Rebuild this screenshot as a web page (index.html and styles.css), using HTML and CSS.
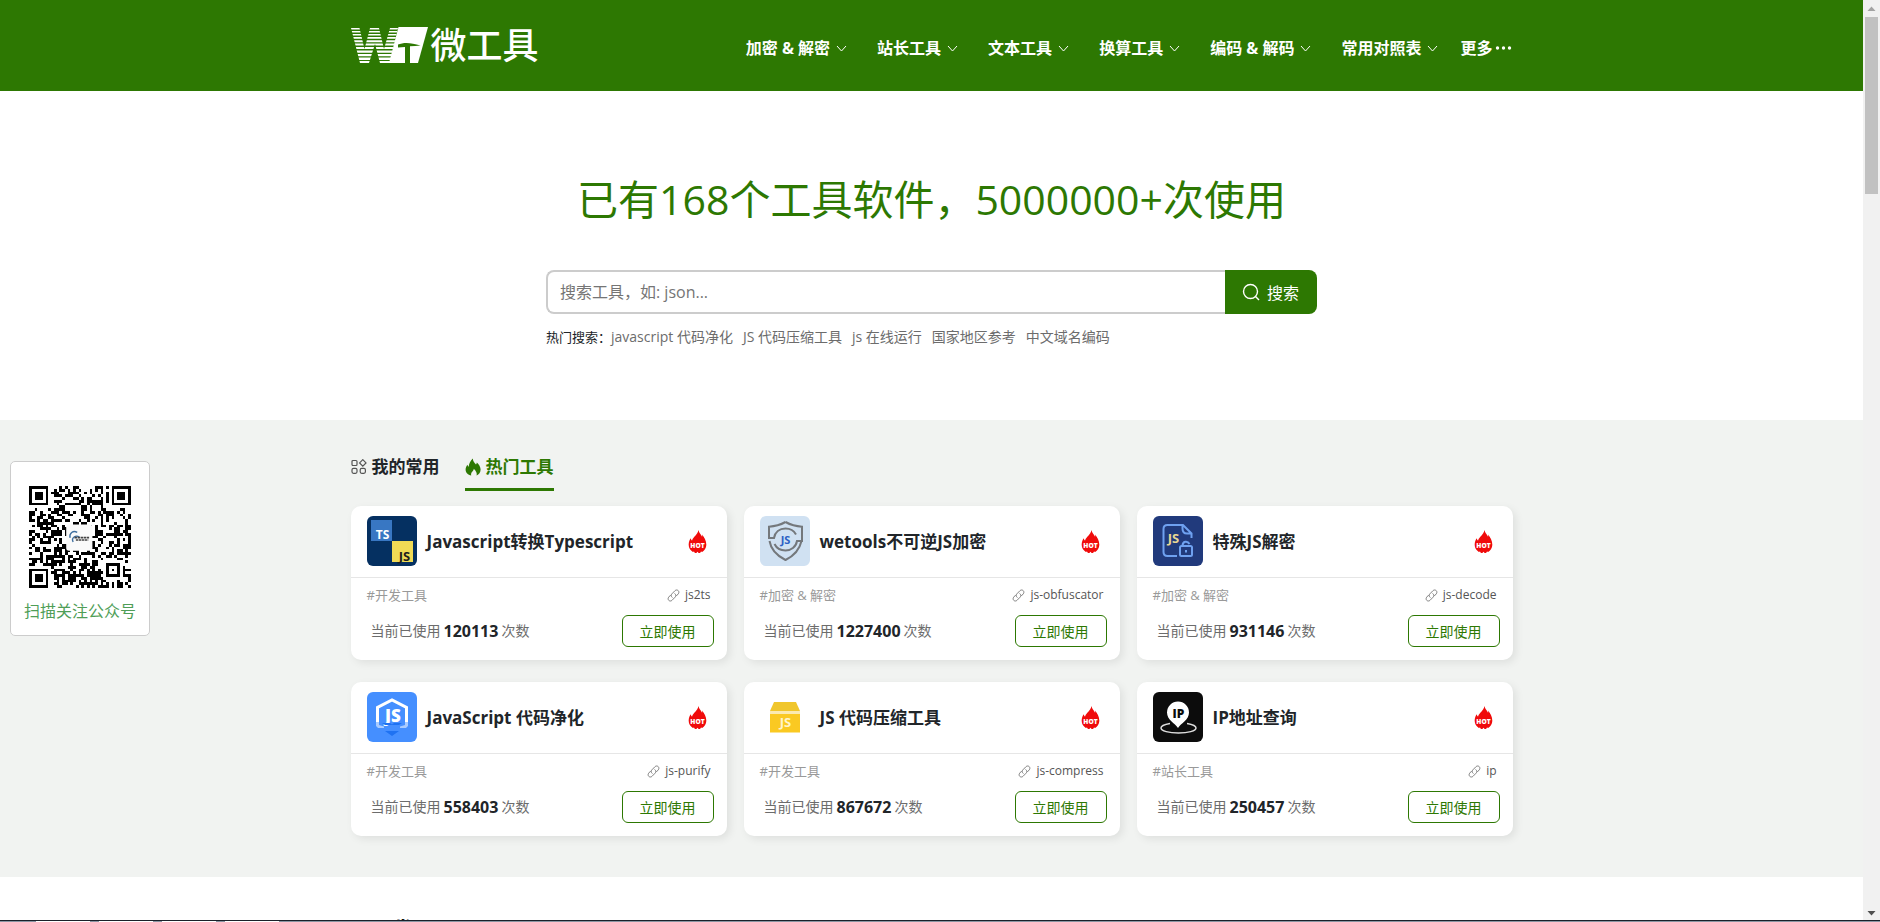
FILE: index.html
```html
<!DOCTYPE html>
<html lang="zh-CN">
<head>
<meta charset="utf-8">
<title>微工具</title>
<link rel="stylesheet" href="styles.css">
</head>
<body>
<svg class="sprite" aria-hidden="true">
  <symbol id="chev" viewBox="0 0 11 11"><path d="M1 3l4.500 5L10 3" fill="none" stroke="currentColor"/></symbol>
  <symbol id="flame" viewBox="0 0 20 25">
    <path fill="#f00b0b" d="M11 .5c.6 3 2.500 4.500 3.800 7 .3-.9.300-1.600.1-2.400C17 8 19.300 11.500 19.300 16c0 3.500-2 6-4.400 7.500l-1.200-.5-1 1.500h-1.500L10 23.200l-1.200 1.300H7.300l-1-1.500-1.200.5C2.500 22 .7 19.300.7 16c0-3.200 1-5.500 2.200-7 .3 1.300.6 2 1.400 2.500C5.500 7.500 10 6 11 .5z"/>
  </symbol>
  <symbol id="link" viewBox="0 0 14 14">
    <g fill="none" stroke="currentColor" stroke-linecap="round">
      <path d="M5.500 9c-1.300-1-1.300-2.600-.2-3.800l3.200-3.300c1.100-1.100 2.600-1.100 3.600-.1s.9 2.500-.1 3.600L10.200 7.300"/>
      <path d="M8.500 5c1.300 1 1.300 2.600.2 3.800l-3.200 3.300c-1.100 1.100-2.600 1.100-3.600.1s-.9-2.500.1-3.600L3.800 6.700"/>
    </g>
  </symbol>
</svg>

<div class="page">
  <header class="header">
    <div class="wrap header-row">
      <a class="logo" href="#">
        <svg width="78" height="38" viewBox="0 0 78 38" aria-hidden="true">
          <defs><clipPath id="w"><path d="M0 1h8.500l5 21L19 1h9l5 21L39 1h8l-8 35H29L24 17 18 36H9z"/></clipPath></defs>
          <g clip-path="url(#w)" fill="#fff">
            <path d="M0 1h50v1.500H0zM0 4h50v1.500H0zM0 7h50v1.600H0zM0 10h50v1.800H0zM0 13.300h50v1.900H0zM0 16.600h50v2H0zM0 20h50v2.100H0zM0 23.400h50v2.300H0zM0 27h50v2.300H0zM0 30.500h50v2.400H0zM0 34h50v2H0z"/>
          </g>
          <path fill="#fff" d="M47.500 0H77l-10 36H38z"/>
          <path fill="#2d7802" d="M47 17.500c6-2.500 13-2 22.500 1-3.500.6-7 .8-10.500.8V36h-5V20l-7 .5z"/>
        </svg>
        <span>微工具</span>
      </a>
      <nav class="nav">
        <a href="#">加密 &amp; 解密<svg class="chev"><use href="#chev"/></svg></a>
        <a href="#">站长工具<svg class="chev"><use href="#chev"/></svg></a>
        <a href="#">文本工具<svg class="chev"><use href="#chev"/></svg></a>
        <a href="#">换算工具<svg class="chev"><use href="#chev"/></svg></a>
        <a href="#">编码 &amp; 解码<svg class="chev"><use href="#chev"/></svg></a>
        <a href="#">常用对照表<svg class="chev"><use href="#chev"/></svg></a>
        <a class="more" href="#">更多<svg width="18" height="16" viewBox="0 0 18 16" fill="currentColor"><circle cx="3.500" cy="8" r="1.700"/><circle cx="9.500" cy="8" r="1.700"/><circle cx="15.500" cy="8" r="1.700"/></svg></a>
      </nav>
    </div>
  </header>

  <section class="hero">
    <h1>已有168个工具软件，5000000+次使用</h1>
    <form class="search">
      <input type="text" aria-label="搜索工具" placeholder="搜索工具，如: json...">
      <button type="button"><svg width="18" height="18" viewBox="0 0 18 18" fill="none" stroke="currentColor" stroke-width="1.400"><circle cx="8.500" cy="8.500" r="7"/><path d="M13.500 13.500l3.500 3.500"/></svg>搜索</button>
    </form>
    <div class="hot-row">
      <span>热门搜索：</span>
      <a href="#">javascript 代码净化</a><a href="#">JS 代码压缩工具</a><a href="#">js 在线运行</a><a href="#">国家地区参考</a><a href="#">中文域名编码</a>
    </div>
  </section>

  <section class="tools">
    <div class="wrap">
      <div class="tabs">
        <a class="tab" href="#"><svg width="16" height="16" viewBox="0 0 16 16" fill="none" stroke="#555" stroke-width="1.200"><rect x="1" y="1.500" width="5" height="5" rx="1"/><path d="M11.800.7l3.200 3.200-3.200 3.200-3.200-3.200z"/><rect x="1" y="9.300" width="5" height="5" rx="1.500"/><rect x="9.200" y="9.300" width="5.200" height="5" rx="1.500"/></svg>我的常用</a>
        <a class="tab active" href="#"><svg width="16" height="18" viewBox="0 0 16 18" fill="currentColor"><path d="M7.800.5c.2 3 1.700 4.400 3.200 6 .6-.5.800-1.200.8-2C14 6.500 15.600 9 15.600 11.500c0 2.800-1.600 4.900-4 6 .6-2.300-.4-4.300-2.800-6.700-.2 1.400-.6 2-1.400 2.700-1 .9-1.600 2.200-1.200 4C3 17 .6 14.700.6 11.500.6 9.500 1.400 8 2.500 6.700c.2 1 .6 1.600 1.200 2C4 5.500 5.500 2.500 7.800.5z"/></svg>热门工具</a>
      </div>
      <div class="grid">
        <article class="card">
          <div class="card-head">
            <svg class="icon" viewBox="0 0 50 50"><rect width="50" height="50" fill="#053061"/><rect x="4" y="4" width="21" height="21" fill="#3877c3"/><rect x="25" y="25" width="21" height="21" fill="#f0da55"/><text x="15.500" y="23" class="ic ts">TS</text><text x="37.500" y="44.500" class="ic js">JS</text></svg>
            <h2>Javascript转换Typescript</h2>
            <svg class="hot" viewBox="0 0 20 25"><use href="#flame"/><text x="10" y="19" class="hot-text">HOT</text></svg>
          </div>
          <div class="meta"><span>#开发工具</span><a href="#"><svg class="link"><use href="#link"/></svg>js2ts</a></div>
          <div class="usage"><p>当前已使用<b>120113</b>次数</p><button type="button">立即使用</button></div>
        </article>
        <article class="card">
          <div class="card-head">
            <svg class="icon" viewBox="0 0 50 50"><rect width="50" height="50" fill="#d0e1f2"/><g fill="none" stroke="#74787c" stroke-width="2"><path d="M25.500 6C20 9 15 10.300 9 10.700V22h5c1-6 5.500-9.500 11.500-9.500 5 0 8.500 2.300 10.500 6M25.500 6C31 9 36 10.300 42 10.700V25h-5c-1 6-6 9.500-11.500 9.500-5 0-9-2.500-11-6.500M9.500 25c1.500 9 7 14.500 16 19 9-4.500 14-10 16-19"/></g><text x="25.500" y="28" class="ic shield">JS</text></svg>
            <h2>wetools不可逆JS加密</h2>
            <svg class="hot" viewBox="0 0 20 25"><use href="#flame"/><text x="10" y="19" class="hot-text">HOT</text></svg>
          </div>
          <div class="meta"><span>#加密 &amp; 解密</span><a href="#"><svg class="link"><use href="#link"/></svg>js-obfuscator</a></div>
          <div class="usage"><p>当前已使用<b>1227400</b>次数</p><button type="button">立即使用</button></div>
        </article>
        <article class="card">
          <div class="card-head">
            <svg class="icon" viewBox="0 0 50 50"><rect width="50" height="50" fill="#213a7c"/><g fill="none" stroke="#6fa1f0" stroke-width="2"><path d="M24 40H14.500c-2.500 0-4-1.500-4-4V13c0-2.500 1.500-4 4-4H30l8.500 8.500V22M29.500 9v3.500c0 3 1.500 5 4.500 5h4.500"/><rect x="27" y="30" width="12" height="10" rx="1.500"/><path d="M29.500 30c0-5 5-5.500 7-2M33 34v2.500"/></g><text x="20.500" y="26.500" class="ic gold">JS</text></svg>
            <h2>特殊JS解密</h2>
            <svg class="hot" viewBox="0 0 20 25"><use href="#flame"/><text x="10" y="19" class="hot-text">HOT</text></svg>
          </div>
          <div class="meta"><span>#加密 &amp; 解密</span><a href="#"><svg class="link"><use href="#link"/></svg>js-decode</a></div>
          <div class="usage"><p>当前已使用<b>931146</b>次数</p><button type="button">立即使用</button></div>
        </article>
        <article class="card">
          <div class="card-head">
            <svg class="icon" viewBox="0 0 50 50"><rect width="50" height="50" fill="#458fff"/><path fill="none" stroke="#fff" stroke-width="3" d="M10.500 31V15.500L25 8l14.500 7.500V31"/><path fill="#a9cbff" d="M9 30h3v3l5 1.500v1.500H11l-2-2zM41 30h-3v3l-5 1.500v1.500h6l2-2z"/><text x="26" y="30" class="ic hex">JS</text><path fill="#1f72f2" d="M15 31h8l2 1.500 2-1.500h8l-3 2H18zM18 39h14l-7 5z"/></svg>
            <h2>JavaScript 代码净化</h2>
            <svg class="hot" viewBox="0 0 20 25"><use href="#flame"/><text x="10" y="19" class="hot-text">HOT</text></svg>
          </div>
          <div class="meta"><span>#开发工具</span><a href="#"><svg class="link"><use href="#link"/></svg>js-purify</a></div>
          <div class="usage"><p>当前已使用<b>558403</b>次数</p><button type="button">立即使用</button></div>
        </article>
        <article class="card">
          <div class="card-head">
            <svg class="icon" viewBox="0 0 50 50"><path fill="#f0c62c" d="M14 10h22l4 9H10z"/><path fill="#fbeab0" d="M10 19h30v3H10z"/><path fill="#fac922" d="M10 22h30v18.500H10z"/><text x="25.500" y="35" class="ic box">JS</text></svg>
            <h2>JS 代码压缩工具</h2>
            <svg class="hot" viewBox="0 0 20 25"><use href="#flame"/><text x="10" y="19" class="hot-text">HOT</text></svg>
          </div>
          <div class="meta"><span>#开发工具</span><a href="#"><svg class="link"><use href="#link"/></svg>js-compress</a></div>
          <div class="usage"><p>当前已使用<b>867672</b>次数</p><button type="button">立即使用</button></div>
        </article>
        <article class="card">
          <div class="card-head">
            <svg class="icon" viewBox="0 0 50 50"><rect width="50" height="50" fill="#0c0c0c"/><path fill="none" stroke="#ddd" stroke-width="1.500" d="M17 31.500C11 32.500 8 34 8 36c0 3 8 5 17.500 5S43 39 43 36c0-2-3-3.500-9-4.500"/><path fill="#fff" d="M25 36c-3-5-11-8-11-15.500a11 11 0 0 1 22 0C36 28 28 31 25 36z"/><text x="25.500" y="25.500" class="ic ip">IP</text></svg>
            <h2>IP地址查询</h2>
            <svg class="hot" viewBox="0 0 20 25"><use href="#flame"/><text x="10" y="19" class="hot-text">HOT</text></svg>
          </div>
          <div class="meta"><span>#站长工具</span><a href="#"><svg class="link"><use href="#link"/></svg>ip</a></div>
          <div class="usage"><p>当前已使用<b>250457</b>次数</p><button type="button">立即使用</button></div>
        </article>
      </div>
    </div>
  </section>

  <section class="next">
    <div class="wrap"><h2>开发工具</h2></div>
  </section>
</div>

<div class="scrollbar" aria-hidden="true">
  <svg width="17" height="17" viewBox="0 0 17 17"><path d="M4.500 11h8l-4-4.500z" fill="#a3a3a3"/></svg>
  <div class="thumb"></div>
  <svg width="17" height="17" viewBox="0 0 17 17"><path d="M4.500 6h8l-4 4.500z" fill="#505050"/></svg>
</div>

<aside class="qr">
  <svg id="qr" viewBox="0 0 37 37" role="img" aria-label="公众号二维码"></svg>
  <p>扫描关注公众号</p>
</aside>

<div class="taskbar" aria-hidden="true"><i></i><i></i><i></i><i></i></div>
<script src="qr.js"></script>
</body>
</html>
```
FILE: styles.css
```css
* { box-sizing: border-box; }
body {
  margin: 0;
  height: 100vh;
  overflow: hidden;
  display: flex;
  background: #fff;
  color: #212529;
  font-family: "Open Sans", "Noto Sans CJK SC", sans-serif;
  font-size: 14px;
}
a { color: inherit; text-decoration: none; }
h1, h2, p { margin: 0; }
button, input { font: inherit; }
svg { flex: none; }
.sprite { position: absolute; width: 0; height: 0; }
.page { flex: 1; min-width: 0; }
.wrap { max-width: 1162px; margin: 0 auto; }

.header { background: #2d7802; color: #fff; }
.header-row { display: flex; align-items: center; justify-content: space-between; height: 91px; }
.logo { display: flex; align-items: center; gap: 2px; font-size: 36px; line-height: 38px; font-weight: 500; }
.nav { display: flex; align-items: center; gap: 30px; padding: 5px 1px 0 0; font-size: 16px; line-height: 24px; font-weight: 700; }
.nav a { display: flex; align-items: center; gap: 6px; }
.nav .more { gap: 1px; margin-left: -8px; }
.chev { width: 11px; height: 11px; }

.hero { display: flex; flex-direction: column; align-items: center; padding: 78px 0 73px; }
.hero h1 { font-size: 41px; line-height: 60px; font-weight: 400; color: #2d7802; }
.search { display: flex; width: 771px; height: 44px; margin-top: 41px; }
.search input { flex: 1; min-width: 0; padding: 0 12px; border: 2px solid #ccc; border-right: 0; border-radius: 8px 0 0 8px; font-size: 16px; outline: 0; }
.search input::placeholder { color: #757575; opacity: 1; }
.search button { display: flex; align-items: center; justify-content: center; gap: 7px; width: 92px; padding: 0 1px 0 0; border: 0; border-radius: 0 8px 8px 0; background: #2d7802; color: #fff; font-size: 16px; }
.hot-row { display: flex; width: 771px; margin-top: 13px; font-size: 13px; line-height: 20px; }
.hot-row a { margin-right: 10px; font-size: 14px; color: #6c6c6c; }

.tools { background: #f1f3f1; padding: 31px 0 41px; }
.tabs { display: flex; gap: 25px; margin-bottom: 15px; }
.tab { display: flex; align-items: center; gap: 5px; padding-bottom: 5px; border-bottom: 3px solid transparent; font-size: 17px; line-height: 32px; font-weight: 700; }
.tab.active { color: #2d7802; border-color: #2d7802; }
.grid { display: grid; grid-template-columns: repeat(3, 1fr); gap: 22px 17px; }
.card { background: #fff; border-radius: 10px; box-shadow: 3px 3px 8px rgba(0, 0, 0, .08); padding-bottom: 13px; }
.card-head { display: flex; align-items: center; gap: 10px; padding: 10px 20px 11px 16px; border-bottom: 1px solid #e6e6e6; }
.card-head h2 { flex: 1; padding-top: 2px; font-size: 17px; line-height: 24px; font-weight: 700; }
.icon { width: 50px; height: 50px; border-radius: 6px; }
.hot { width: 19px; height: 25px; }
.hot-text { font-size: 7px; font-weight: 800; fill: #fff; text-anchor: middle; }
.ic { font-weight: 700; text-anchor: middle; }
.ts { font-size: 12px; fill: #fff; }
.js { font-size: 13px; fill: #1d1d1d; }
.shield { font-size: 11px; fill: #2c5fc4; }
.gold { font-size: 13px; fill: #e9d794; }
.hex { font-size: 17px; font-weight: 800; fill: #fff; }
.box { font-size: 13px; fill: #fff5cc; }
.ip { font-size: 12px; font-weight: 800; fill: #0c0c0c; }
.meta { display: flex; justify-content: space-between; margin-top: 7px; padding: 0 16px; font-size: 13px; line-height: 20px; color: #999; }
.meta a { display: flex; align-items: center; gap: 5px; font-size: 12px; color: #555; }
.link { width: 13px; height: 13px; color: #777; }
.usage { display: flex; align-items: center; justify-content: space-between; margin-top: 10px; padding: 0 13px 0 20px; color: #6c6c6c; }
.usage p { display: flex; align-items: center; gap: 3px; line-height: 20px; }
.usage b { color: #212529; font-size: 16px; }
.usage button { width: 92px; height: 32px; padding: 0; border: 1px solid #2d7802; border-radius: 6px; background: #fff; color: #2d7802; }

.next { padding-top: 38px; }
.next h2 { padding-left: 24px; font-size: 19px; line-height: 28px; color: #000; }

.scrollbar { display: flex; flex-direction: column; width: 17px; background: #f1f1f1; }
.thumb { width: 13px; height: 177px; margin: 0 2px auto; background: #c1c1c1; }

.qr { position: fixed; left: 10px; top: 461px; width: 140px; padding: 24px 0 11px; border: 1px solid #ccc; border-radius: 5px; background: #fff; text-align: center; }
.qr svg { display: block; width: 102px; height: 102px; margin: 0 auto 10px; }
.qr p { font-size: 16px; line-height: 26px; color: #4f9e57; white-space: nowrap; }

.taskbar { position: fixed; left: 0; right: 0; bottom: 0; display: flex; gap: 9px; height: 2px; padding: 1px 0 0 36px; background: linear-gradient(#1a2029 50%, #8b95a3 50%); }
.taskbar i { width: 54px; background: #fff; }
```
FILE: qr.js
```js
const N = 37;
const svg = document.getElementById("qr");
const grid = [];
let seed = 20231;
const rand = () => (seed = (seed * 1103515245 + 12345) % 2147483648) / 2147483648;
for (let y = 0; y < N; y++) {
  grid.push([]);
  for (let x = 0; x < N; x++) grid[y].push(rand() > 0.5);
}
function finder(ox, oy, size) {
  const c = (size - 1) / 2;
  for (let y = -1; y <= size; y++) {
    for (let x = -1; x <= size; x++) {
      const row = grid[oy + y];
      if (!row || ox + x < 0 || ox + x >= N) continue;
      const d = Math.max(Math.abs(x - c), Math.abs(y - c));
      row[ox + x] = d <= c && d !== c - 1;
    }
  }
}
finder(0, 0, 7);
finder(N - 7, 0, 7);
finder(0, N - 7, 7);
finder(28, 28, 5);
let d = "";
grid.forEach((row, y) => row.forEach((on, x) => { if (on) d += `M${x} ${y}h1v1h-1z`; }));
svg.innerHTML = `<path d="${d}" shape-rendering="crispEdges"/>
<rect x="13.500" y="14" width="9.500" height="9.500" rx="1" fill="#fafafa"/>
<path d="M17.500 16.800c-1.500-.8-3 .3-2.600 2M16 20.300c-.8-1.500 1-2.700 2.300-1.700" fill="none" stroke="#3f6f9f" stroke-width=".5"/>
<path d="M16.500 18.700h5.500M17 19.600h4.500" stroke="#444" stroke-width=".6" stroke-dasharray=".9 .2"/>`;
```
